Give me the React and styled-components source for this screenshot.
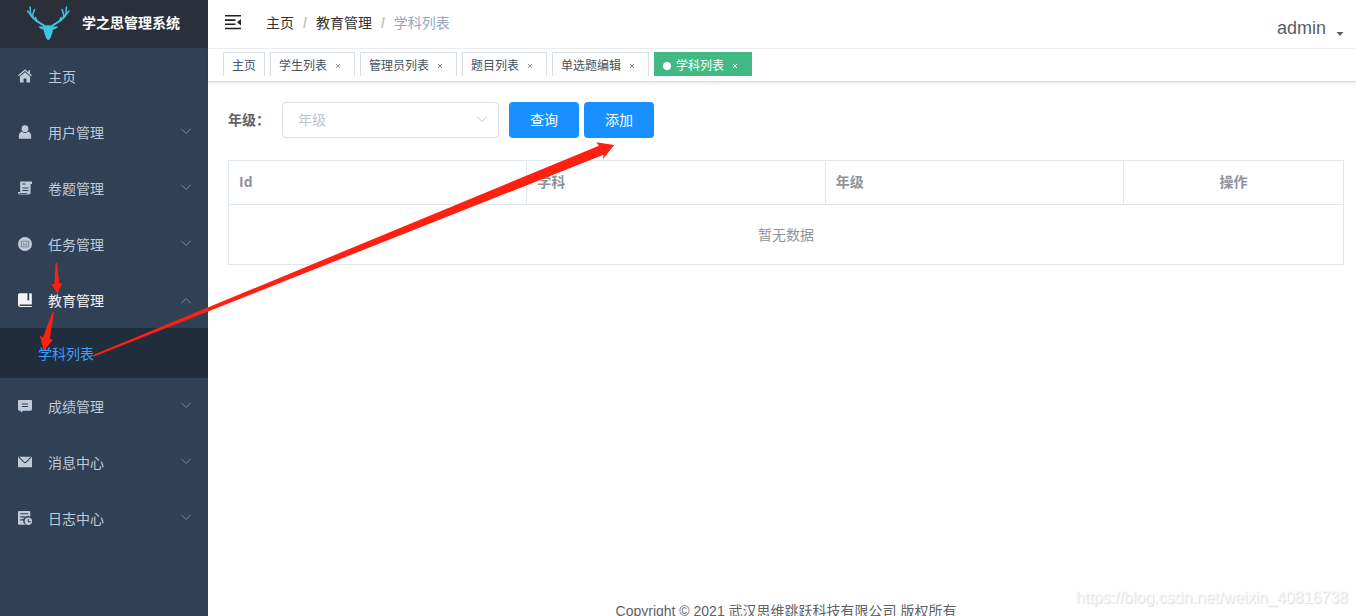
import React from "react";
import styled, { createGlobalStyle, css } from "styled-components";

const GlobalStyle = createGlobalStyle`
  *, *::before, *::after { box-sizing: border-box; }
  body {
    margin: 0;
    background: #fff;
    color: #606266;
    font-family: "Liberation Sans", "Noto Sans CJK SC", sans-serif;
    font-size: 14px;
    line-height: 20px;
  }
  a { color: inherit; text-decoration: none; }
  ul, ol { margin: 0; padding: 0; list-style: none; }
  button, select { font: inherit; }
`;

const Shell = styled.div`
  position: relative;
  display: flex;
  height: 100vh;
  overflow: hidden;
`;

const Sidebar = styled.aside`
  flex: 0 0 208px;
  background: #304156;
`;

const Brand = styled.a`
  display: flex;
  align-items: center;
  gap: 12px;
  height: 48px;
  padding: 0 26px 2px;
  background: #2b2f3a;
  color: #fff;
  font-weight: 700;
  white-space: nowrap;
`;

const DeerLogo = styled.svg`
  width: 44px;
  height: 36px;
`;

const MenuButton = styled.button`
  display: flex;
  align-items: center;
  gap: 16px;
  width: 100%;
  height: 56px;
  padding: 0 16px 0 18px;
  border: 0;
  background: transparent;
  color: ${(p) => (p.$open ? "#f4f4f5" : "#bfcbd9")};
  text-align: left;
  cursor: pointer;
`;

const MenuText = styled.span`
  flex: 1;
  padding-top: 2px;
`;

const MenuIcon = styled.svg`
  width: 14px;
  height: 14px;
  fill: currentColor;
`;

const Chevron = styled.svg`
  width: 12px;
  height: 12px;
  fill: none;
  stroke: ${(p) => p.$color};
  transform: ${(p) => (p.$up ? "rotate(180deg)" : "none")};
`;

const SubMenu = styled.ul`
  background: #1f2d3d;
`;

const SubLink = styled.a`
  display: flex;
  align-items: center;
  height: 50px;
  padding: 2px 0 0 38px;
  color: #409eff;
`;

const Main = styled.div`
  flex: 1;
  min-width: 0;
`;

const Navbar = styled.header`
  display: flex;
  align-items: center;
  height: 49px;
  padding: 0 12px 4px 16px;
  border-bottom: 1px solid #f0f1f2;
`;

const Hamburger = styled.button`
  display: flex;
  width: 18px;
  height: 18px;
  padding: 0;
  border: 0;
  background: transparent;
  cursor: pointer;
`;

const Crumbs = styled.ol`
  display: flex;
  flex: 1;
  margin-left: 24px;
  padding-top: 2px;
`;

const Crumb = styled.li`
  color: ${(p) => (p.$current ? "#97a8be" : "#303133")};
  &:not(:first-child)::before {
    content: "/";
    margin: 0 9px;
    color: #c0c4cc;
    font-weight: 700;
  }
`;

const UserMenu = styled.button`
  display: flex;
  align-items: flex-end;
  gap: 10px;
  padding: 12px 0 0;
  border: 0;
  background: transparent;
  color: #5a5e66;
  font-size: 18px;
  line-height: 20px;
  cursor: pointer;
`;

const Caret = styled.svg`
  width: 8px;
  height: 8px;
  fill: #5a5e66;
`;

const TagBar = styled.nav`
  display: flex;
  gap: 5px;
  height: 33px;
  padding: 3px 15px 0;
  border-bottom: 1px solid #d8dce5;
  box-shadow: 0 1px 3px rgba(0, 0, 0, 0.12);
`;

const Tag = styled.div`
  display: flex;
  align-items: center;
  height: 24px;
  padding: 2px 8px 0;
  border: 1px solid #d8dce5;
  border-bottom: 0;
  color: #495060;
  font-size: 12px;
  line-height: 20px;
  white-space: nowrap;
  ${(p) =>
    p.$active &&
    css`
      background: #42b983;
      border-color: #42b983;
      color: #fff;
      &::before {
        content: "";
        width: 8px;
        height: 8px;
        margin-right: 5px;
        border-radius: 50%;
        background: #fff;
      }
    `}
`;

const TagClose = styled.button`
  display: flex;
  justify-content: center;
  width: 16px;
  margin-left: 3px;
  padding: 0;
  border: 0;
  background: transparent;
  color: ${(p) => (p.$active ? "#fff" : "#909399")};
  cursor: pointer;
  svg {
    width: 6px;
    height: 6px;
    stroke: currentColor;
  }
`;

const Content = styled.main`
  min-height: calc(100vh - 82px);
  padding: 20px 12px 0 20px;
  display: flex;
  flex-direction: column;
`;

const Filters = styled.form`
  display: flex;
  align-items: center;
  height: 36px;
  margin-bottom: 22px;
`;

const FilterLabel = styled.label`
  width: 54px;
  font-weight: 700;
`;

const SelectBox = styled.div`
  position: relative;
  width: 217px;
  margin-right: 10px;
  svg {
    position: absolute;
    top: 12px;
    right: 11px;
    pointer-events: none;
  }
`;

const Select = styled.select`
  width: 100%;
  height: 36px;
  padding: 0 30px 0 15px;
  border: 1px solid #dcdfe6;
  border-radius: 4px;
  background: #fff;
  color: #c0c4cc;
  appearance: none;
`;

const PrimaryButton = styled.button`
  width: 70px;
  height: 36px;
  margin-right: 5px;
  padding: 0;
  border: 0;
  border-radius: 4px;
  background: #1890ff;
  color: #fff;
  cursor: pointer;
`;

const Table = styled.table`
  width: 100%;
  table-layout: fixed;
  border-collapse: collapse;
  color: #909399;
`;

const HeadCell = styled.th`
  width: ${(p) => p.$width || "auto"};
  height: 44px;
  padding: 0 10px 2px;
  border: 1px solid #dfe6ec;
  font-family: "Open Sans", "Noto Sans CJK SC", sans-serif;
  text-align: ${(p) => p.$align || "left"};
`;

const EmptyCell = styled.td`
  height: 60px;
  padding: 0;
  border: 1px solid #dfe6ec;
  text-align: center;
`;

const Footer = styled.footer`
  flex: none;
  margin-top: 336px;
  text-align: center;
`;

const Annotations = styled.svg`
  position: absolute;
  top: 0;
  left: 0;
  width: 616px;
  height: 360px;
  fill: #ff2012;
  pointer-events: none;
`;

const Watermark = styled.div`
  position: absolute;
  right: 8px;
  bottom: 8px;
  color: #f8f8f8;
  font-size: 16px;
  text-shadow: 1px 1px 1px rgba(0, 0, 0, 0.15);
  pointer-events: none;
`;

const icons = {
  home: (
    <>
      <path d="M8 .3 0 7.200l1 1.100L8 2.300l7 6 1-1.100-2.200-1.900V1.500h-2v2.100z" />
      <path d="M8 3.600 2.200 8.600V15.500h4.200v-4.700h3.200v4.700h4.200V8.600z" />
    </>
  ),
  user: (
    <>
      <circle cx="8" cy="4.200" r="3.900" />
      <path d="M4.300 7.500C2.400 8.300 1 10 1 12.200V15.700h14v-3.500c0-2.200-1.400-3.900-3.300-4.700A5 5 0 0 1 8 9a5 5 0 0 1-3.700-1.500z" />
    </>
  ),
  paper: (
    <path
      fillRule="evenodd"
      d="M2.500 0.500H16v3h-1.600v10c0 1.200-.8 2-2 2H2c-1.200 0-2-.8-2-2v-.8h2.500zM5 4h3.500V2.800H5zm0 4.500h7V7.300H5zm0 3h7v-1.200H5zM1.500 13.700h9v.8h-9z"
    />
  ),
  task: (
    <>
      <circle cx="8" cy="8" r="8" />
      <g fill="none" stroke="#304156" strokeOpacity="0.600">
        <rect x="3.800" y="4.700" width="8.400" height="6.600" rx="0.800" />
        <path d="M5.500 7h1.300M9.200 7h1.300M5.500 9.700 7 8.300l1 1 1-1 1.500 1.400" />
      </g>
    </>
  ),
  book: (
    <path
      fillRule="evenodd"
      d="M2 0.200h8.800v8.600l1-.8 1 .8V.2h1.700c.8 0 1.300.5 1.300 1.300v11.700H2.500a.8.8 0 0 0 0 1.600h13.300V16H2.200C1 16 0 15 0 13.800V2.200C0 1 .8.2 2 .2z"
    />
  ),
  score: (
    <path
      fillRule="evenodd"
      d="M1.500 1h13C15.500 1 16 1.500 16 2.500v9.300c0 1-.5 1.500-1.500 1.500H6L3.500 15.500 2.800 13.300H1.500c-1 0-1.500-.5-1.500-1.500V2.500C0 1.500.5 1 1.500 1zM4.500 5v1.200h7V5zm0 3v1.200h7V8z"
    />
  ),
  mail: (
    <>
      <rect y="2" width="16" height="12" rx="1" />
      <path d="M1 2.500 6.800 8.200c.7.700 1.700.7 2.400 0L15 2.500" fill="none" stroke="#304156" strokeWidth="1.200" />
    </>
  ),
  log: (
    <>
      <path
        fillRule="evenodd"
        d="M1.200 0h11.600c.7 0 1.200.5 1.200 1.200V6.500a5 5 0 0 0-6 8.500l.6.700H1.200C.5 15.700 0 15.200 0 14.500V1.200C0 .5.500 0 1.200 0zM2.500 2.500v1.300h9V2.500zm0 3.500v1.300h5V6zm0 3.500v1.300h3.300V9.500z"
      />
      <path
        fillRule="evenodd"
        d="M11.800 7.500a4.200 4.200 0 1 0 0 8.400 4.200 4.200 0 0 0 0-8.400zM11.200 9.200h1.200v2.500h2v1.200h-3.200z"
      />
    </>
  ),
};

const menu = [
  { icon: "home", text: "主页", leaf: true },
  { icon: "user", text: "用户管理" },
  { icon: "paper", text: "卷题管理" },
  { icon: "task", text: "任务管理" },
  { icon: "book", text: "教育管理", children: ["学科列表"] },
  { icon: "score", text: "成绩管理" },
  { icon: "mail", text: "消息中心" },
  { icon: "log", text: "日志中心" },
];

const tags = [
  { text: "主页", fixed: true },
  { text: "学生列表" },
  { text: "管理员列表" },
  { text: "题目列表" },
  { text: "单选题编辑" },
  { text: "学科列表", active: true },
];

function Arrow({ up, color }) {
  return (
    <Chevron viewBox="0 0 12 12" $up={up} $color={color} aria-hidden="true">
      <path d="M1.200 2.700 6 7.500l4.800-4.800" />
    </Chevron>
  );
}

function MenuItem({ item }) {
  const open = Boolean(item.children);
  return (
    <li>
      <MenuButton type="button" $open={open} aria-expanded={item.leaf ? undefined : open}>
        <MenuIcon viewBox="0 0 16 16" aria-hidden="true">
          {icons[item.icon]}
        </MenuIcon>
        <MenuText>{item.text}</MenuText>
        {!item.leaf && <Arrow up={open} color="#7d8792" />}
      </MenuButton>
      {open && (
        <SubMenu>
          {item.children.map((text) => (
            <li key={text}>
              <SubLink href="#subject">{text}</SubLink>
            </li>
          ))}
        </SubMenu>
      )}
    </li>
  );
}

function Deer() {
  return (
    <DeerLogo viewBox="0 0 44 36" aria-hidden="true">
      <g fill="none" stroke="#3cc4e0" strokeLinecap="round" strokeLinejoin="round">
        <path strokeWidth="2" d="M19.500 22C17 19 13 18 10 15.500C7.500 13.500 6 12 4.500 9.500M25 22c2.500-3 6.500-4 9.500-6.500 2.500-2 4-3.500 5.500-6" />
        <path strokeWidth="1.500" d="M4.500 9.500 1.500 6M5.500 11C3.500 8 5 5 4 2M7.500 13C5.500 10 7.500 8 8.500 4.500M11 16 9.500 12.500M40 9.500l3-3.500M39 11c2-3 .500-6 1.500-9M37 13c2-3 0-5-1-8.500M33.500 16l1.500-3.500" />
      </g>
      <path
        fill="#3cc4e0"
        d="M12.500 21.500c3-.3 5.500.2 7-.8.800-.4 1.700-.5 2.800-.5s2 .1 2.800.5c1.500 1 4 .5 7 .8-1 2-3.200 2.800-5.200 3.300-.2 2.700-1.200 5-2 7.200C24.300 34 23.300 35 22.300 35s-2-1-2.600-3c-.8-2.200-1.800-4.500-2-7.200-2-.5-4.200-1.300-5.200-3.300z"
      />
    </DeerLogo>
  );
}

export default function App() {
  return (
    <>
      <GlobalStyle />
      <Shell>
        <Sidebar>
          <Brand href="#home">
            <Deer />
            学之思管理系统
          </Brand>
          <ul>
            {menu.map((item) => (
              <MenuItem key={item.text} item={item} />
            ))}
          </ul>
        </Sidebar>

        <Main>
          <Navbar>
            <Hamburger type="button" aria-label="折叠菜单">
              <svg width="18" height="18" viewBox="0 0 18 18" fill="#222">
                <path d="M1 2h16v1.600H1zM1 6.300h10.500v1.600H1zM1 10.500h10.500v1.600H1zM1 14.700h16v1.600H1zM17 6v6.500l-4-3.250z" />
              </svg>
            </Hamburger>
            <Crumbs>
              <Crumb>主页</Crumb>
              <Crumb>教育管理</Crumb>
              <Crumb $current>学科列表</Crumb>
            </Crumbs>
            <UserMenu type="button">
              admin
              <Caret viewBox="0 0 8 8" aria-hidden="true">
                <path d="M.5 2h7L4 6z" />
              </Caret>
            </UserMenu>
          </Navbar>

          <TagBar>
            {tags.map((tag) => (
              <Tag key={tag.text} $active={tag.active}>
                <a href="#tag">{tag.text}</a>
                {!tag.fixed && (
                  <TagClose type="button" $active={tag.active} aria-label="关闭">
                    <svg viewBox="0 0 6 6">
                      <path d="M1 1l4 4M5 1 1 5" />
                    </svg>
                  </TagClose>
                )}
              </Tag>
            ))}
          </TagBar>

          <Content>
            <Filters onSubmit={(e) => e.preventDefault()}>
              <FilterLabel htmlFor="grade">年级：</FilterLabel>
              <SelectBox>
                <Select id="grade" defaultValue="">
                  <option value="">年级</option>
                </Select>
                <Arrow color="#c0c4cc" />
              </SelectBox>
              <PrimaryButton type="submit">查询</PrimaryButton>
              <PrimaryButton type="button">添加</PrimaryButton>
            </Filters>

            <Table>
              <thead>
                <tr>
                  <HeadCell>Id</HeadCell>
                  <HeadCell>学科</HeadCell>
                  <HeadCell>年级</HeadCell>
                  <HeadCell $width="220px" $align="center">操作</HeadCell>
                </tr>
              </thead>
              <tbody>
                <tr>
                  <EmptyCell colSpan={4}>暂无数据</EmptyCell>
                </tr>
              </tbody>
            </Table>

            <Footer>Copyright © 2021 武汉思维跳跃科技有限公司 版权所有</Footer>
          </Content>
        </Main>

        <Annotations viewBox="0 0 616 360" aria-hidden="true">
          <path d="M55.500 263h1.500l2.300 20.700 3-.7-4.800 10.700-6.200-9.700 3.200.2z" />
          <path d="M52.500 312l1.500.2-4.200 26.300 3 1.500-9 10.800-4.100-15.500 3.300 2.200z" />
          <path d="M93 355 599 145.700l-2.700-3.400 18 2.800L603 159l.5-4.200L93 357z" />
        </Annotations>
        <Watermark>https://blog.csdn.net/weixin_40816738</Watermark>
      </Shell>
    </>
  );
}
